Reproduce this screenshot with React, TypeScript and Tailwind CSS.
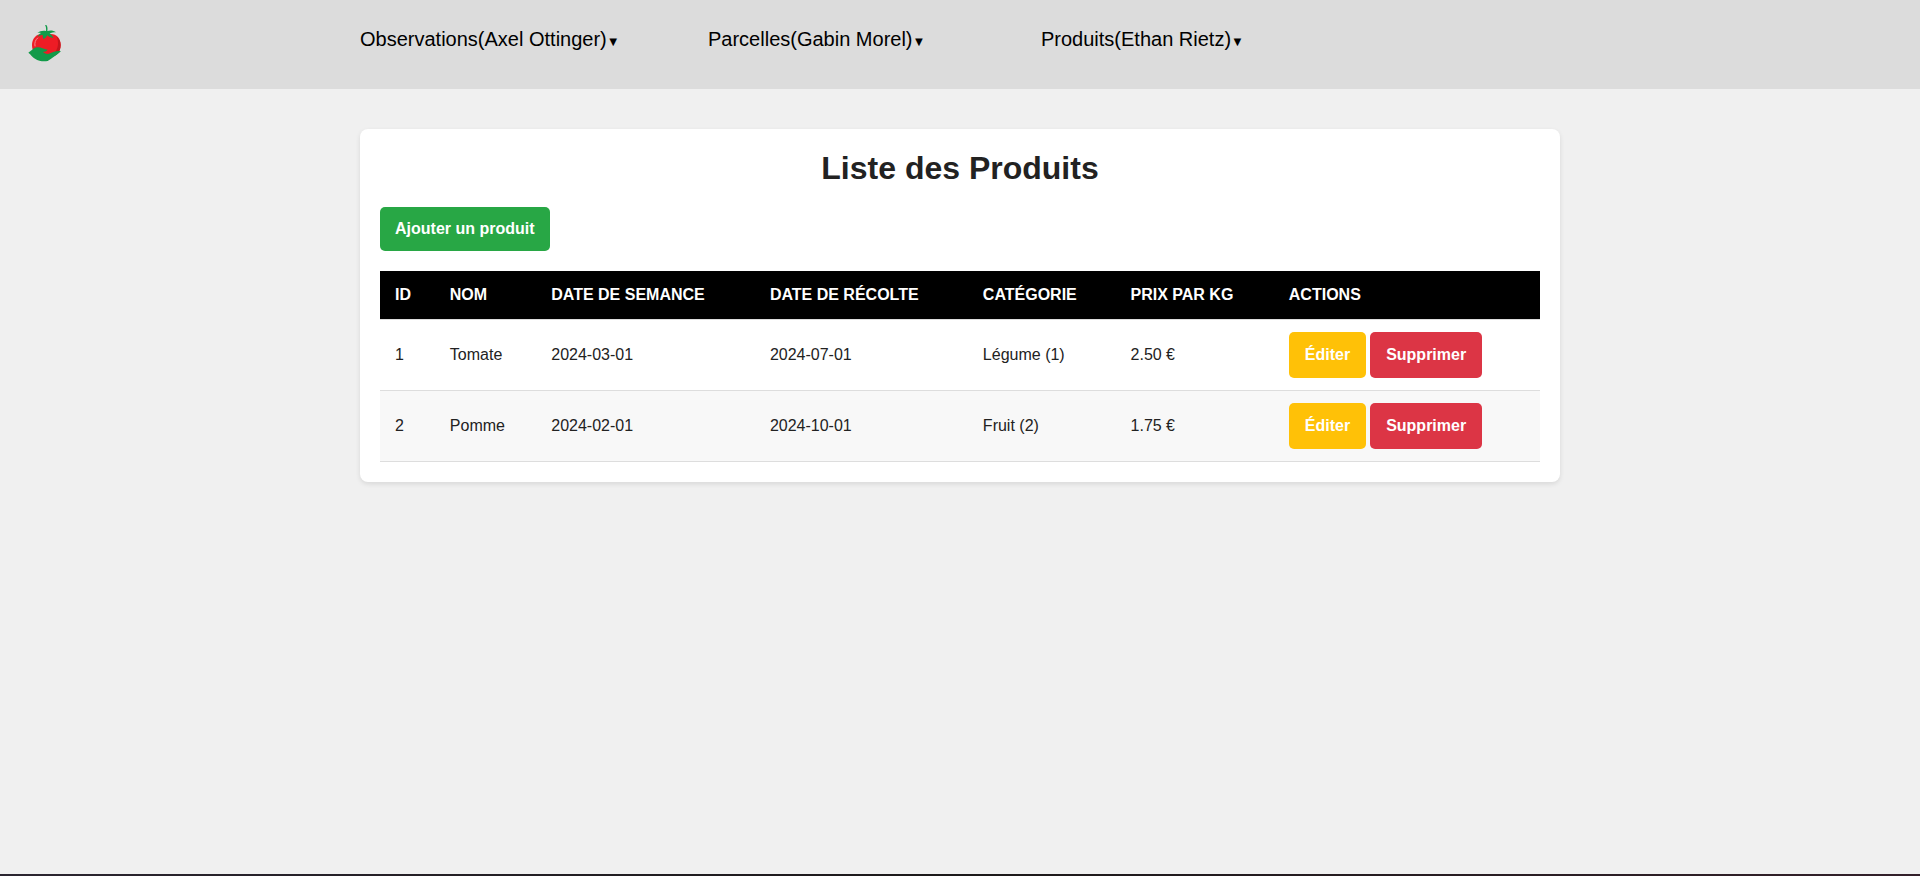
const menus = [
  "Observations(Axel Ottinger)",
  "Parcelles(Gabin Morel)",
  "Produits(Ethan Rietz)",
];

const columns = [
  "ID",
  "Nom",
  "Date de semance",
  "Date de récolte",
  "Catégorie",
  "Prix par kg",
  "Actions",
];

const products = [
  { id: 1, name: "Tomate", sown: "2024-03-01", harvested: "2024-07-01", category: "Légume (1)", price: "2.50 €" },
  { id: 2, name: "Pomme", sown: "2024-02-01", harvested: "2024-10-01", category: "Fruit (2)", price: "1.75 €" },
];

function TomatoLogo() {
  return (
    <svg viewBox="0 0 114 126" className="h-[42px] w-[38px]" aria-hidden="true">
      <path d="M61 38C36 30 18 46 18 70c0 24 18 37 43 37s43-14 43-38c0-26-19-39-43-31Z" fill="#ee1c25" />
      <path d="M91 43c8 15 8 38-9 53-5 5-11 8-18 10 25 0 40-14 40-37 0-11-5-20-13-26Z" fill="#c4161c" />
      <path d="M27 72c-2-10 1-18 8-24" fill="none" stroke="#f58a8e" strokeWidth="3" strokeLinecap="round" />
      <path d="M57 9l5 1c3 6 3 11 2 17 9-3 18-2 26 4-8 0-14 1-19 4 6 3 9 7 11 13-8-1-14-4-18-8-3 5-6 8-11 12-2-5-3-8-3-13-5 0-9 2-15 6 2-6 5-9 10-12-4-1-7-1-11 0 8-6 16-8 26-6 1-7 0-13-3-18Z" fill="#129a49" />
      <path d="M7 92c8-3 14-15 27-16 11-1 17 5 31 7-3 5-8 6-15 7 10 6 14 7 22 4 10-4 20-9 33-6-12 11-29 22-40 29-14 2-27 0-38-7-8-5-12-12-20-18Z" fill="#129a49" />
    </svg>
  );
}

export default function App() {
  return (
    <div className="flex min-h-screen flex-col bg-[#f0f0f0] font-['Liberation_Sans',Arial,sans-serif] text-base leading-[18px] text-[#222222]">
      <header className="flex min-h-[89px] bg-[#dcdcdc] px-[26px] text-black">
        <a href="#accueil" aria-label="Accueil" className="flex w-[334px] shrink-0 items-start pt-[22px]">
          <TomatoLogo />
        </a>
        <nav className="grid grid-cols-[348px_333px_auto] items-start pt-7">
          {menus.map((menu) => (
            <a key={menu} href="#menu" className="flex items-baseline whitespace-nowrap text-xl leading-[23px]">
              {menu}
              <span className="text-[13px] leading-3">▼</span>
            </a>
          ))}
        </nav>
      </header>

      <main className="mx-auto mt-10 w-full max-w-[1200px] rounded-lg bg-white p-5 shadow-[0_2px_5px_rgba(0,0,0,0.1)]">
        <h1 className="mb-5 text-center text-[32px] leading-[38px] font-bold">Liste des Produits</h1>
        <button type="button" className="mb-5 block rounded-[5px] bg-[#28a745] px-[15px] py-[13px] font-bold text-white">
          Ajouter un produit
        </button>
        <table className="w-full border-collapse text-left">
          <thead>
            <tr className="border-b border-[#dddddd] bg-black text-white">
              {columns.map((column) => (
                <th key={column} className="px-[15px] py-[15px] font-bold uppercase">
                  {column}
                </th>
              ))}
            </tr>
          </thead>
          <tbody>
            {products.map((p) => (
              <tr key={p.id} className="border-b border-[#dddddd] even:bg-[#f8f8f8]">
                <td className="px-[15px] py-3">{p.id}</td>
                <td className="px-[15px] py-3">{p.name}</td>
                <td className="px-[15px] py-3">{p.sown}</td>
                <td className="px-[15px] py-3">{p.harvested}</td>
                <td className="px-[15px] py-3">{p.category}</td>
                <td className="px-[15px] py-3">{p.price}</td>
                <td className="px-[15px] py-3">
                  <div className="flex gap-1">
                    <button type="button" className="rounded-[5px] bg-[#ffc107] px-4 py-3.5 font-bold text-white">
                      Éditer
                    </button>
                    <button type="button" className="rounded-[5px] bg-[#dc3545] px-4 py-3.5 font-bold text-white">
                      Supprimer
                    </button>
                  </div>
                </td>
              </tr>
            ))}
          </tbody>
        </table>
      </main>

      <footer className="mt-auto h-0.5 bg-linear-to-r from-[#2b2530] via-[#1c191a] to-[#33202a]" />
    </div>
  );
}
